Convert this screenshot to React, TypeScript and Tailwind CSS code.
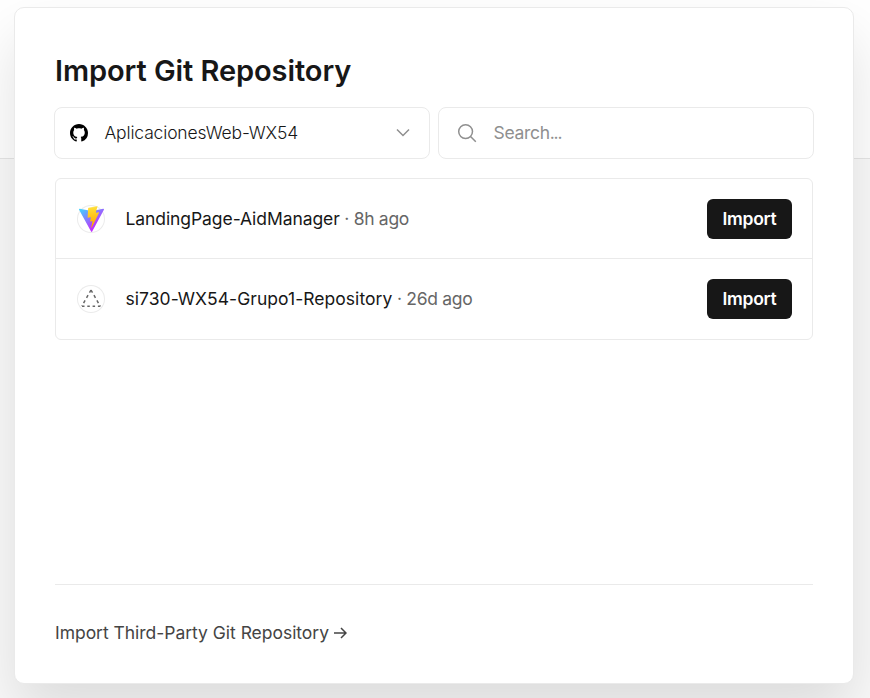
import React from "react";

function GitHubMark() {
  return (
    <svg width="18" height="18" viewBox="0 0 16 16" fill="#000" className="shrink-0" aria-hidden="true">
      <path d="M8 0C3.58 0 0 3.58 0 8c0 3.54 2.29 6.53 5.47 7.59.4.07.55-.17.55-.38 0-.19-.01-.82-.01-1.49-2.01.37-2.53-.49-2.69-.94-.09-.23-.48-.94-.82-1.13-.28-.15-.68-.52-.01-.53.63-.01 1.08.58 1.23.82.72 1.21 1.87.87 2.33.66.07-.52.28-.87.51-1.07-1.78-.2-3.64-.89-3.64-3.95 0-.87.31-1.59.82-2.15-.08-.2-.36-1.02.08-2.12 0 0 .67-.21 2.2.82.64-.18 1.32-.27 2-.27s1.36.09 2 .27c1.53-1.04 2.2-.82 2.2-.82.44 1.1.16 1.92.08 2.12.51.56.82 1.27.82 2.15 0 3.07-1.87 3.75-3.65 3.95.29.25.54.73.54 1.48 0 1.07-.01 1.93-.01 2.2 0 .21.15.46.55.38A8.01 8.01 0 0 0 16 8c0-4.42-3.58-8-8-8z" />
    </svg>
  );
}

function ViteLogo() {
  return (
    <svg width="25" height="26" viewBox="0 0 256 257" preserveAspectRatio="none" aria-hidden="true">
      <defs>
        <linearGradient id="viteBody" x1="-.828%" x2="57.636%" y1="7.652%" y2="78.411%">
          <stop offset="0%" stopColor="#41D1FF" />
          <stop offset="100%" stopColor="#BD34FE" />
        </linearGradient>
        <linearGradient id="viteBolt" x1="43.376%" x2="50.316%" y1="2.242%" y2="89.03%">
          <stop offset="0%" stopColor="#FFEA83" />
          <stop offset="8.333%" stopColor="#FFDD35" />
          <stop offset="100%" stopColor="#FFA800" />
        </linearGradient>
      </defs>
      <path fill="url(#viteBody)" d="M255.153 37.938 134.897 252.976c-2.483 4.44-8.862 4.466-11.382.048L.875 37.958c-2.746-4.814 1.371-10.646 6.827-9.67l120.385 21.517a6.537 6.537 0 0 0 2.322-.004l117.867-21.483c5.438-.991 9.574 4.796 6.877 9.62Z" />
      <path fill="url(#viteBolt)" d="M185.432.063 96.44 17.501a3.268 3.268 0 0 0-2.634 3.014l-5.474 92.456a3.268 3.268 0 0 0 3.997 3.378l24.777-5.718c2.318-.535 4.413 1.507 3.936 3.838l-7.361 36.047c-.495 2.426 1.782 4.5 4.151 3.78l15.304-4.649c2.372-.72 4.652 1.36 4.15 3.788l-11.698 56.621c-.732 3.542 3.979 5.473 5.943 2.437l1.313-2.028 72.516-144.72c1.215-2.423-.88-5.186-3.54-4.672l-25.505 4.922c-2.396.462-4.435-1.77-3.759-4.114l16.646-57.705c.677-2.35-1.37-4.583-3.769-4.113Z" />
    </svg>
  );
}

function DashedTriangle() {
  return (
    <svg width="28" height="28" viewBox="0 0 28 28" fill="none" stroke="#666" strokeWidth="1.5" aria-hidden="true">
      <path d="m14 5 9.2 16.2" strokeDasharray="3 3" />
      <path d="M14 5 4.8 21.2" strokeDasharray="3 3" />
      <path d="M5 21.2h19" strokeDasharray="2.5 2.8" />
    </svg>
  );
}

type RepoProps = { icon: React.ReactNode; name: string; age: string; nameClass: string; textClass: string };

function RepoRow({ icon, name, age, nameClass, textClass }: RepoProps) {
  return (
    <li className="flex h-20 items-center pr-5 pl-[21px]">
      <span className="flex size-7 shrink-0 items-center justify-center rounded-full shadow-[inset_0_0_0_1px_#ebebeb]">{icon}</span>
      <p className={`ml-5 flex-1 pl-[0.5px] text-[17.5px] whitespace-pre text-[#171717] ${textClass}`}>
        <span className={nameClass}>{name}</span>
        <span className="tracking-[-0.3px] text-[#666]"> · {age}</span>
      </p>
      <button className="h-10 w-[85px] rounded-md bg-[#171717] pb-px text-[17.5px] leading-[39px] font-semibold tracking-[-0.3px] text-white">Import</button>
    </li>
  );
}

export default function App() {
  return (
    <main className="h-[698px] overflow-hidden bg-[linear-gradient(#ffffff_0_158px,#e6e6e6_158px_159px,#fafafa_159px)] px-[14px] pt-[7px] font-['Inter',sans-serif]">
      <section className="flex h-[677px] w-[840px] flex-col rounded-[10px] border border-[#eaeaea] bg-white px-[39px] pt-[41px] shadow-[0_30px_60px_rgba(0,0,0,0.12)]">
        <h1 className="ml-px h-11 self-start text-[29px] leading-11 font-semibold tracking-[-0.08px] whitespace-nowrap text-[#171717]">Import Git Repository</h1>
        <div className="mt-[14px] grid grid-cols-2 gap-2">
          <button className="flex h-[52px] items-center rounded-lg border border-[#eaeaea] pr-[18px] pl-[14.5px] text-left">
            <GitHubMark />
            <span className="ml-[17px] text-[17.5px] font-light tracking-[-0.16px] text-[#171717]">AplicacionesWeb-WX54</span>
            <svg className="ml-auto" width="16" height="16" viewBox="0 0 16 16" fill="none" stroke="#8f8f8f" strokeWidth="1.5" aria-hidden="true">
              <path d="M2 4.5 8 10.5l6-6" />
            </svg>
          </button>
          <label className="flex h-[52px] items-center rounded-lg border border-[#eaeaea] pl-[18px]">
            <svg width="20" height="20" viewBox="0 0 20 20" fill="none" stroke="#8f8f8f" strokeWidth="1.5" aria-hidden="true">
              <circle cx="8.6" cy="8.6" r="6.9" />
              <path d="m13.5 13.5 5.3 5.3" />
            </svg>
            <span className="ml-[16.5px] text-[17.5px] text-[#8f8f8f]">
              <span className="tracking-[-0.3px]">Search</span>
              <span className="tracking-[-1.2px]">...</span>
            </span>
          </label>
        </div>
        <ul className="mx-px mt-[19px] divide-y divide-[#eaeaea] rounded-md border border-[#eaeaea]">
          <RepoRow icon={<ViteLogo />} name="LandingPage-AidManager" age="8h ago" nameClass="tracking-[-0.08px]" textClass="pt-0.5" />
          <RepoRow icon={<DashedTriangle />} name="si730-WX54-Grupo1-Repository" age="26d ago" nameClass="tracking-[0.04px]" textClass="pt-0" />
        </ul>
        <footer className="mx-px mt-auto h-[99px] border-t border-[#eaeaea] pt-9">
          <a className="flex items-center text-[17.5px] leading-6 text-[#444]">
            <span className="tracking-[-0.03px] whitespace-nowrap">Import Third-Party Git Repository</span>
            <svg className="ml-1" width="14" height="14" viewBox="0 0 14 14" fill="none" stroke="#444" strokeWidth="1.5" aria-hidden="true">
              <path d="M1 7h12M8 2l5 5-5 5" />
            </svg>
          </a>
        </footer>
      </section>
    </main>
  );
}
